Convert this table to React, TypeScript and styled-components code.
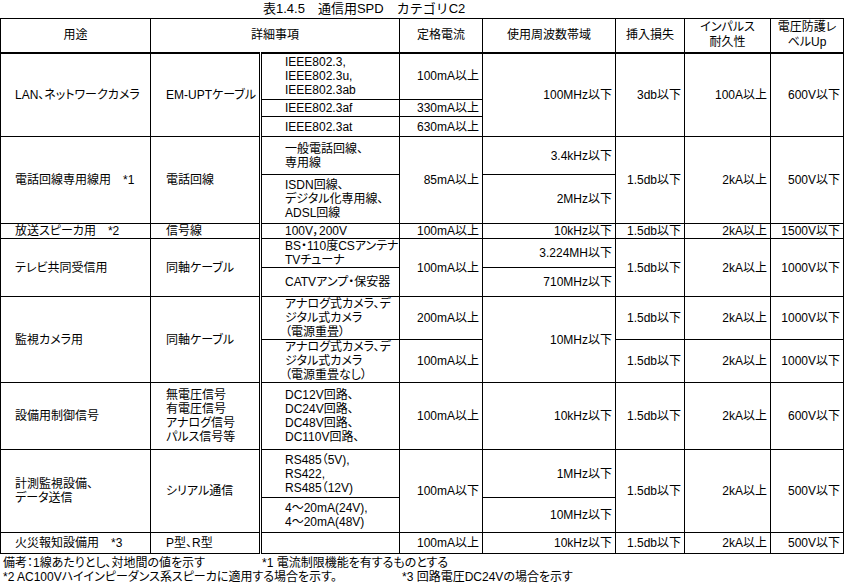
import React from 'react';
import styled, {createGlobalStyle} from 'styled-components';

const GlobalStyle = createGlobalStyle`
  body {
    margin: 0;
    background: #fff;
    color: #000;
    font-family: "Liberation Sans Narrow", "Liberation Sans", "Noto Sans CJK JP", sans-serif;
    font-size: 12px;
    font-feature-settings: "palt" 1;
  }
`;

const Page = styled.div`
  width: 845px;
  display: flex;
  flex-direction: column;
`;

const Title = styled.div`
  height: 18px;
  line-height: 18px;
  padding-left: 263px;
  font-size: 13px;
  font-feature-settings: normal;
  white-space: pre;
`;

const Sheet = styled.table`
  border-collapse: collapse;
  table-layout: fixed;
  width: 843px;
`;

const Row = styled.tr<{ $h: number }>`
  height: ${p => p.$h}px;
`;

const HeadCell = styled.th`
  border: 1px solid #000;
  border-bottom: 2px solid #000;
  padding: 0;
  font-weight: normal;
  text-align: center;
  vertical-align: middle;
  line-height: 15px;
`;

type Align = 'left' | 'center' | 'right';

const Cell = styled.td<{ $align?: Align; $indent?: number; $double?: boolean }>`
  border: 1px solid #000;
  ${p => p.$double && 'border-right: 3px double #000;'}
  padding: 0 ${p => (p.$align === 'right' ? 3 : 0)}px 0 ${p => p.$indent ?? 0}px;
  text-align: ${p => p.$align ?? 'left'};
  vertical-align: middle;
  line-height: 14px;
  white-space: nowrap;
  overflow: hidden;
`;

const Use = (props: React.ComponentProps<typeof Cell>) => <Cell $indent={14} {...props}/>;
const Kind = (props: React.ComponentProps<typeof Cell>) => <Cell $indent={15} $double {...props}/>;
const Detail = (props: React.ComponentProps<typeof Cell>) => <Cell $indent={23} {...props}/>;
const Num = (props: React.ComponentProps<typeof Cell>) => <Cell $align="right" {...props}/>;

const Notes = styled.div`
  display: flex;
  flex-direction: column;
  padding: 2px 0 0 3px;
  line-height: 14px;
`;

const NoteRow = styled.div`
  display: flex;
  white-space: nowrap;
`;

const Note = styled.span<{ $w?: number }>`
  ${p => p.$w && `width: ${p.$w}px;`}
  flex: none;
`;

const lines = (...t: string[]) => t.map((s, i) => <React.Fragment key={i}>{i > 0 && <br/>}{s}</React.Fragment>);

const COLS = [150, 110, 139, 83, 133, 69, 86, 73];

export default function App() {
    return (
        <Page>
            <GlobalStyle/>
            <Title>{'表1.4.5　通信用SPD　カテゴリC2'}</Title>
            <Sheet>
                <colgroup>
                    {COLS.map((w, i) => <col key={i} style={{width: w}}/>)}
                </colgroup>
                <thead>
                <Row $h={34}>
                    <HeadCell>用途</HeadCell>
                    <HeadCell colSpan={2}>詳細事項</HeadCell>
                    <HeadCell>定格電流</HeadCell>
                    <HeadCell>使用周波数帯域</HeadCell>
                    <HeadCell>挿入損失</HeadCell>
                    <HeadCell>{lines('インパルス', '耐久性')}</HeadCell>
                    <HeadCell>{lines('電圧防護レ', 'ベルUp')}</HeadCell>
                </Row>
                </thead>
                <tbody>
                <Row $h={47}>
                    <Use rowSpan={3}>LAN、ネットワークカメラ</Use>
                    <Kind rowSpan={3}>EM-UPTケーブル</Kind>
                    <Detail>{lines('IEEE802.3,', 'IEEE802.3u,', 'IEEE802.3ab')}</Detail>
                    <Num>100mA以上</Num>
                    <Num rowSpan={3}>100MHz以下</Num>
                    <Num rowSpan={3}>3db以下</Num>
                    <Num rowSpan={3}>100A以上</Num>
                    <Num rowSpan={3}>600V以下</Num>
                </Row>
                <Row $h={17}>
                    <Detail>IEEE802.3af</Detail>
                    <Num>330mA以上</Num>
                </Row>
                <Row $h={20}>
                    <Detail>IEEE802.3at</Detail>
                    <Num>630mA以上</Num>
                </Row>

                <Row $h={38}>
                    <Use rowSpan={2}>{'電話回線専用線用　*1'}</Use>
                    <Kind rowSpan={2}>電話回線</Kind>
                    <Detail>{lines('一般電話回線、', '専用線')}</Detail>
                    <Num rowSpan={2}>85mA以上</Num>
                    <Num>3.4kHz以下</Num>
                    <Num rowSpan={2}>1.5db以下</Num>
                    <Num rowSpan={2}>2kA以上</Num>
                    <Num rowSpan={2}>500V以下</Num>
                </Row>
                <Row $h={49}>
                    <Detail>{lines('ISDN回線、', 'デジタル化専用線、', 'ADSL回線')}</Detail>
                    <Num>2MHz以下</Num>
                </Row>

                <Row $h={15}>
                    <Use>{'放送スピーカ用　*2'}</Use>
                    <Kind>信号線</Kind>
                    <Detail>100V，200V</Detail>
                    <Num>100mA以上</Num>
                    <Num>10kHz以下</Num>
                    <Num>1.5db以下</Num>
                    <Num>2kA以上</Num>
                    <Num>1500V以下</Num>
                </Row>

                <Row $h={29}>
                    <Use rowSpan={2}>テレビ共同受信用</Use>
                    <Kind rowSpan={2}>同軸ケーブル</Kind>
                    <Detail>{lines('BS・110度CSアンテナ', 'TVチューナ')}</Detail>
                    <Num rowSpan={2}>100mA以上</Num>
                    <Num>3.224MH以下</Num>
                    <Num rowSpan={2}>1.5db以下</Num>
                    <Num rowSpan={2}>2kA以上</Num>
                    <Num rowSpan={2}>1000V以下</Num>
                </Row>
                <Row $h={29}>
                    <Detail>CATVアンプ・保安器</Detail>
                    <Num>710MHz以下</Num>
                </Row>

                <Row $h={43}>
                    <Use rowSpan={2}>監視カメラ用</Use>
                    <Kind rowSpan={2}>同軸ケーブル</Kind>
                    <Detail>{lines('アナログ式カメラ、デ', 'ジタル式カメラ', '（電源重畳）')}</Detail>
                    <Num>200mA以上</Num>
                    <Num rowSpan={2}>10MHz以下</Num>
                    <Num>1.5db以下</Num>
                    <Num>2kA以上</Num>
                    <Num>1000V以下</Num>
                </Row>
                <Row $h={43}>
                    <Detail>{lines('アナログ式カメラ、デ', 'ジタル式カメラ', '（電源重畳なし）')}</Detail>
                    <Num>100mA以上</Num>
                    <Num>1.5db以下</Num>
                    <Num>2kA以上</Num>
                    <Num>1000V以下</Num>
                </Row>

                <Row $h={67}>
                    <Use>設備用制御信号</Use>
                    <Kind>{lines('無電圧信号', '有電圧信号', 'アナログ信号', 'パルス信号等')}</Kind>
                    <Detail>{lines('DC12V回路、', 'DC24V回路、', 'DC48V回路、', 'DC110V回路、')}</Detail>
                    <Num>100mA以上</Num>
                    <Num>10kHz以下</Num>
                    <Num>1.5db以下</Num>
                    <Num>2kA以上</Num>
                    <Num>600V以下</Num>
                </Row>

                <Row $h={48}>
                    <Use rowSpan={2}>{lines('計測監視設備、', 'データ送信')}</Use>
                    <Kind rowSpan={2}>シリアル通信</Kind>
                    <Detail>{lines('RS485（5V),', 'RS422,', 'RS485（12V)')}</Detail>
                    <Num rowSpan={2}>100mA以下</Num>
                    <Num>1MHz以下</Num>
                    <Num rowSpan={2}>1.5db以下</Num>
                    <Num rowSpan={2}>2kA以上</Num>
                    <Num rowSpan={2}>500V以下</Num>
                </Row>
                <Row $h={35}>
                    <Detail>{lines('4～20mA(24V),', '4～20mA(48V)')}</Detail>
                    <Num>10MHz以下</Num>
                </Row>

                <Row $h={21}>
                    <Use>{'火災報知設備用　*3'}</Use>
                    <Kind>P型、R型</Kind>
                    <Detail/>
                    <Num>100mA以上</Num>
                    <Num>10kHz以下</Num>
                    <Num>1.5db以下</Num>
                    <Num>2kA以上</Num>
                    <Num>500V以下</Num>
                </Row>
                </tbody>
            </Sheet>
            <Notes>
                <NoteRow>
                    <Note $w={259}>備考：1線あたりとし、対地間の値を示す</Note>
                    <Note>*1 電流制限機能を有するものとする</Note>
                </NoteRow>
                <NoteRow>
                    <Note $w={399}>*2 AC100Vハイインピーダンス系スピーカに適用する場合を示す。</Note>
                    <Note>*3 回路電圧DC24Vの場合を示す</Note>
                </NoteRow>
            </Notes>
        </Page>
    );
}
